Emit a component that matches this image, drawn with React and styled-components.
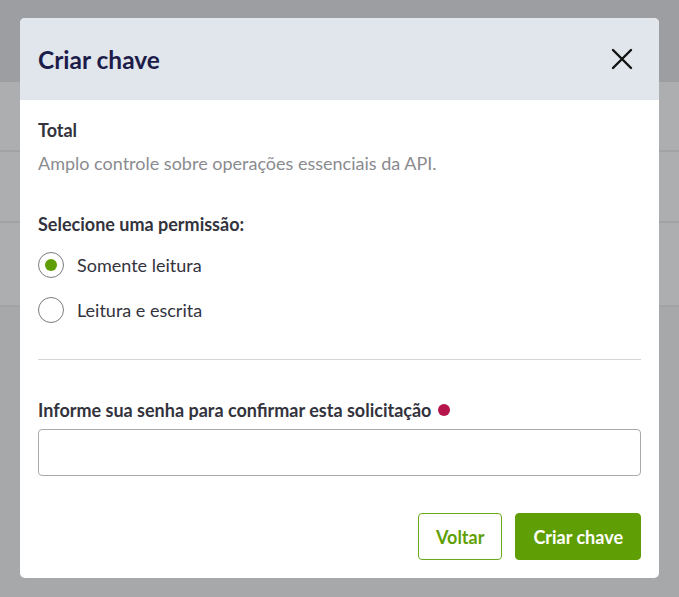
import React, { useState } from 'react'
import styled, { createGlobalStyle } from 'styled-components'

const COLORS = {
  NAVY: '#1c1c4a',
  TEXT: '#33333d',
  MUTED: '#8a8b8f',
  GREEN: '#5f9f05',
  GREEN_BORDER: '#6aab1c',
  RED_DOT: '#b5154b',
  LINE: '#d5d5d7',
  HEADER: '#e1e6ec',
}

const GlobalStyle = createGlobalStyle`
  * { box-sizing: border-box; }
  html, body {
    margin: 0;
    padding: 0;
    background: #a7a8aa;
    font-family: Lato, "Open Sans", sans-serif;
  }
`

const Page = styled.div`
  position: relative;
  width: 679px;
  height: 597px;
  overflow: hidden;
  background: #a7a8aa;
`

const TopBar = styled.div`
  height: 82px;
  background: #9c9ea1;
`

const BackRow = styled.div`
  height: ${props => props.h}px;
  background: #adaeaf;
  border-bottom: 2px solid #a2a3a5;
`

const Overlay = styled.div`
  position: absolute;
  inset: 0;
  padding: 18px 20px 19px;
`

const Modal = styled.div`
  width: 639px;
  height: 560px;
  background: #fff;
  border-radius: 5px;
  overflow: hidden;
  display: flex;
  flex-direction: column;
`

const Header = styled.div`
  height: 82px;
  flex: none;
  background: ${COLORS.HEADER};
  display: flex;
  align-items: center;
  justify-content: space-between;
  padding: 0 22px 0 18px;
`

const Title = styled.h2`
  margin: 0;
  font-size: 24.5px;
  font-weight: 700;
  color: ${COLORS.NAVY};
`

const CloseButton = styled.button`
  width: 30px;
  height: 30px;
  padding: 0;
  border: none;
  background: none;
  display: flex;
  align-items: center;
  justify-content: center;
  cursor: pointer;
`

const Body = styled.div`
  padding: 18px;
  display: flex;
  flex-direction: column;
`

const Strong = styled.div`
  font-size: 18px;
  line-height: 24px;
  font-weight: 700;
  color: ${COLORS.TEXT};
  margin-top: ${props => props.mt || 0}px;
  display: flex;
  align-items: center;
  gap: 7px;
`

const Muted = styled.div`
  font-size: 18px;
  line-height: 24px;
  color: ${COLORS.MUTED};
  margin-top: 9px;
`

const RadioRow = styled.label`
  display: flex;
  align-items: center;
  gap: 13px;
  height: 26px;
  margin-top: ${props => props.mt}px;
  font-size: 18px;
  color: ${COLORS.TEXT};
  cursor: pointer;
`

const RadioCircle = styled.span`
  width: 26px;
  height: 26px;
  border-radius: 50%;
  border: 1.5px solid #7b7c80;
  display: flex;
  align-items: center;
  justify-content: center;
  flex: none;

  &::after {
    content: '';
    width: 12px;
    height: 12px;
    border-radius: 50%;
    background: ${COLORS.GREEN};
    display: ${props => (props.checked ? 'block' : 'none')};
  }
`

const Divider = styled.hr`
  margin: 36px 0 0;
  border: none;
  border-top: 1.5px solid ${COLORS.LINE};
`

const RequiredDot = styled.span`
  width: 12px;
  height: 12px;
  border-radius: 50%;
  background: ${COLORS.RED_DOT};
`

const Input = styled.input`
  margin-top: 7px;
  height: 47px;
  width: 100%;
  border: 1.5px solid #a9aaad;
  border-radius: 4px;
  padding: 0 12px;
  font-size: 16px;
  font-family: inherit;
  outline: none;
`

const Actions = styled.div`
  margin-top: 37px;
  display: flex;
  justify-content: flex-end;
  gap: 13px;
`

const Button = styled.button`
  height: 47px;
  padding: 0 17px;
  border-radius: 4px;
  font-family: inherit;
  font-size: 18px;
  font-weight: 700;
  cursor: pointer;
  border: 1.5px solid ${props => (props.primary ? COLORS.GREEN : COLORS.GREEN_BORDER)};
  background: ${props => (props.primary ? COLORS.GREEN : '#fff')};
  color: ${props => (props.primary ? '#fff' : COLORS.GREEN)};
`

const options = ['Somente leitura', 'Leitura e escrita']

export default function App() {
  const [selected, setSelected] = useState(0)

  return (
    <>
      <GlobalStyle />
      <Page>
        <TopBar />
        <BackRow h={70} />
        <BackRow h={71} />
        <BackRow h={84} />

        <Overlay>
          <Modal>
            <Header>
              <Title>Criar chave</Title>
              <CloseButton aria-label="Fechar">
                <svg width="22" height="22" viewBox="0 0 22 22">
                  <path d="M2 2 L20 20 M20 2 L2 20" stroke="#111" strokeWidth="2.4" strokeLinecap="round" />
                </svg>
              </CloseButton>
            </Header>

            <Body>
              <Strong>Total</Strong>
              <Muted>Amplo controle sobre operações essenciais da API.</Muted>

              <Strong mt={37}>Selecione uma permissão:</Strong>
              {options.map((label, i) => (
                <RadioRow key={label} mt={i === 0 ? 16 : 19} onClick={() => setSelected(i)}>
                  <RadioCircle checked={selected === i} />
                  {label}
                </RadioRow>
              ))}

              <Divider />

              <Strong mt={38}>
                Informe sua senha para confirmar esta solicitação
                <RequiredDot />
              </Strong>
              <Input type="password" />

              <Actions>
                <Button>Voltar</Button>
                <Button primary>Criar chave</Button>
              </Actions>
            </Body>
          </Modal>
        </Overlay>
      </Page>
    </>
  )
}
